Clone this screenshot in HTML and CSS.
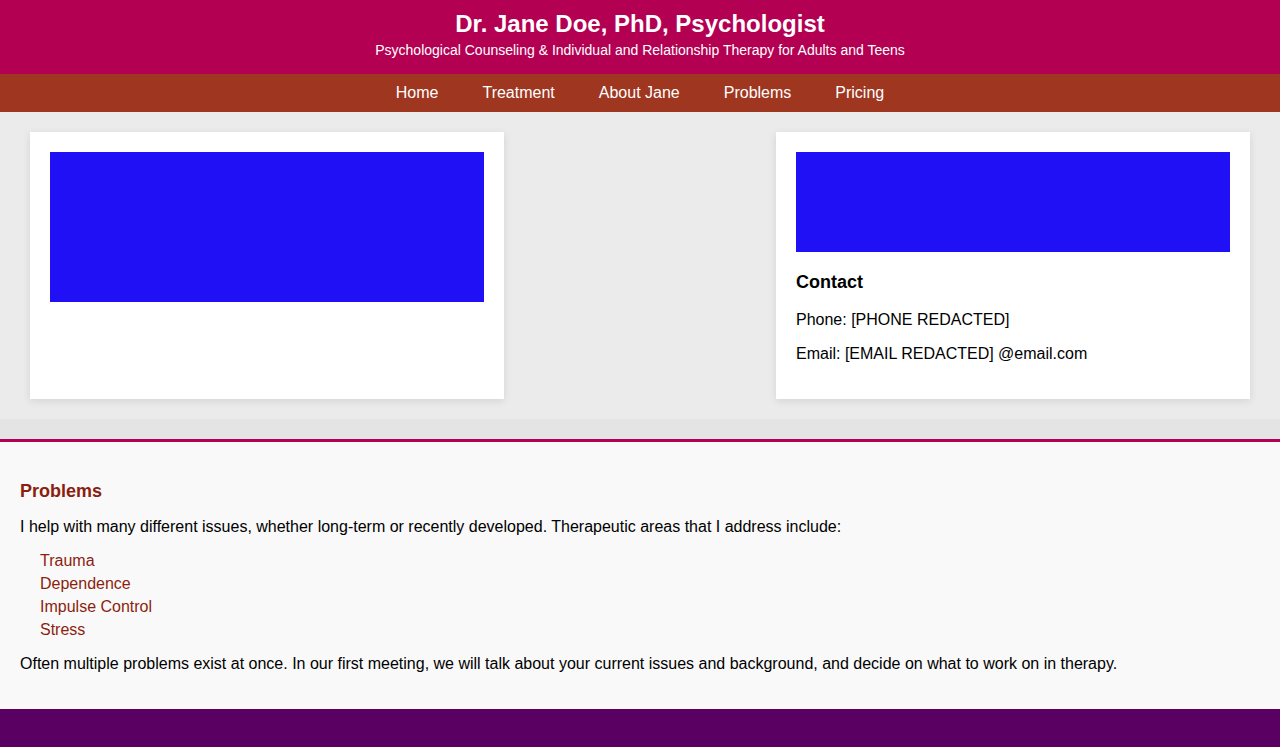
FILE: index.html
```html
<!DOCTYPE html>
<html lang="en">
<head>
<meta charset="utf-8">
<title>Dr. Jane Doe, PhD, Psychologist</title>
<link rel="stylesheet" href="styles.css">
</head>
<body>
<header class="site-header">
  <h1 class="site-title">Dr. Jane Doe, PhD, Psychologist</h1>
  <p class="site-tagline">Psychological Counseling &amp; Individual and Relationship Therapy for Adults and Teens</p>
</header>
<nav class="site-nav">
  <a href="#">Home</a>
  <a href="#">Treatment</a>
  <a href="#">About Jane</a>
  <a href="#">Problems</a>
  <a href="#">Pricing</a>
</nav>
<section class="cards">
  <div class="card">
    <div class="card-image tall"></div>
  </div>
  <div class="card">
    <div class="card-image short"></div>
    <h3 class="card-title">Contact</h3>
    <p class="card-text">Phone: [PHONE REDACTED]</p>
    <p class="card-text">Email: [EMAIL REDACTED] @email.com</p>
  </div>
</section>
<div class="band"></div>
<section class="problems">
  <h2 class="problems-title">Problems</h2>
  <p class="problems-text">I help with many different issues, whether long-term or recently developed. Therapeutic areas that I address include:</p>
  <ul class="problems-list">
    <li>Trauma</li>
    <li>Dependence</li>
    <li>Impulse Control</li>
    <li>Stress</li>
  </ul>
  <p class="problems-text last">Often multiple problems exist at once. In our first meeting, we will talk about your current issues and background, and decide on what to work on in therapy.</p>
</section>
<footer class="site-footer"></footer>
</body>
</html>
```

FILE: styles.css
```css
* { box-sizing: border-box; }
html, body { margin: 0; padding: 0; }
body {
  font-family: "Liberation Sans", Arial, sans-serif;
  font-size: 16px;
  color: #000;
  background: #5a0062;
}
.site-header {
  background: #b40052;
  color: #fff;
  text-align: center;
  padding: 10px 0 0;
  height: 74px;
}
.site-title {
  margin: 0;
  font-size: 24px;
  line-height: 28px;
  font-weight: bold;
}
.site-tagline {
  margin: 5px 0 0;
  font-size: 14px;
  line-height: 15px;
}
.site-nav {
  background: #9f361f;
  height: 38px;
  display: flex;
  justify-content: center;
  align-items: center;
}
.site-nav a {
  color: #fff;
  text-decoration: none;
  font-size: 16px;
  line-height: 18px;
  padding: 0 22px;
}
.cards {
  background: #ebebeb;
  display: flex;
  justify-content: space-between;
  align-items: stretch;
  padding: 20px 30px;
}
.card {
  width: 474px;
  background: #fff;
  padding: 20px;
  box-shadow: 0 2px 8px rgba(0, 0, 0, 0.1);
}
.card-image {
  background: #1f10f5;
  width: 100%;
}
.card-image.tall { height: 150px; }
.card-image.short { height: 100px; }
.card-title {
  margin: 18px 0 0;
  font-size: 18px;
  line-height: 25px;
  font-weight: bold;
}
.card-text {
  margin: 16px 0 0;
  line-height: 18px;
}
.card-text:last-child {
  margin-bottom: 16px;
}
.band {
  background: #e4e4e4;
  border-bottom: 3px solid #b40052;
  height: 23px;
}
.problems {
  background: #f9f9f9;
  padding: 39px 20px 21px;
}
.problems-title {
  margin: 0;
  font-size: 18px;
  line-height: 21px;
  color: #8b1e0e;
  font-weight: bold;
}
.problems-text {
  margin: 16px 0 0;
  line-height: 18px;
}
.problems-list {
  list-style: none;
  margin: 13px 0 0;
  padding: 0 0 0 20px;
  color: #8b1e0e;
}
.problems-list li {
  line-height: 23px;
}
.problems-text.last {
  margin: 14px 0 15px;
}
.site-footer {
  background: #5a0062;
  height: 38px;
}
```
